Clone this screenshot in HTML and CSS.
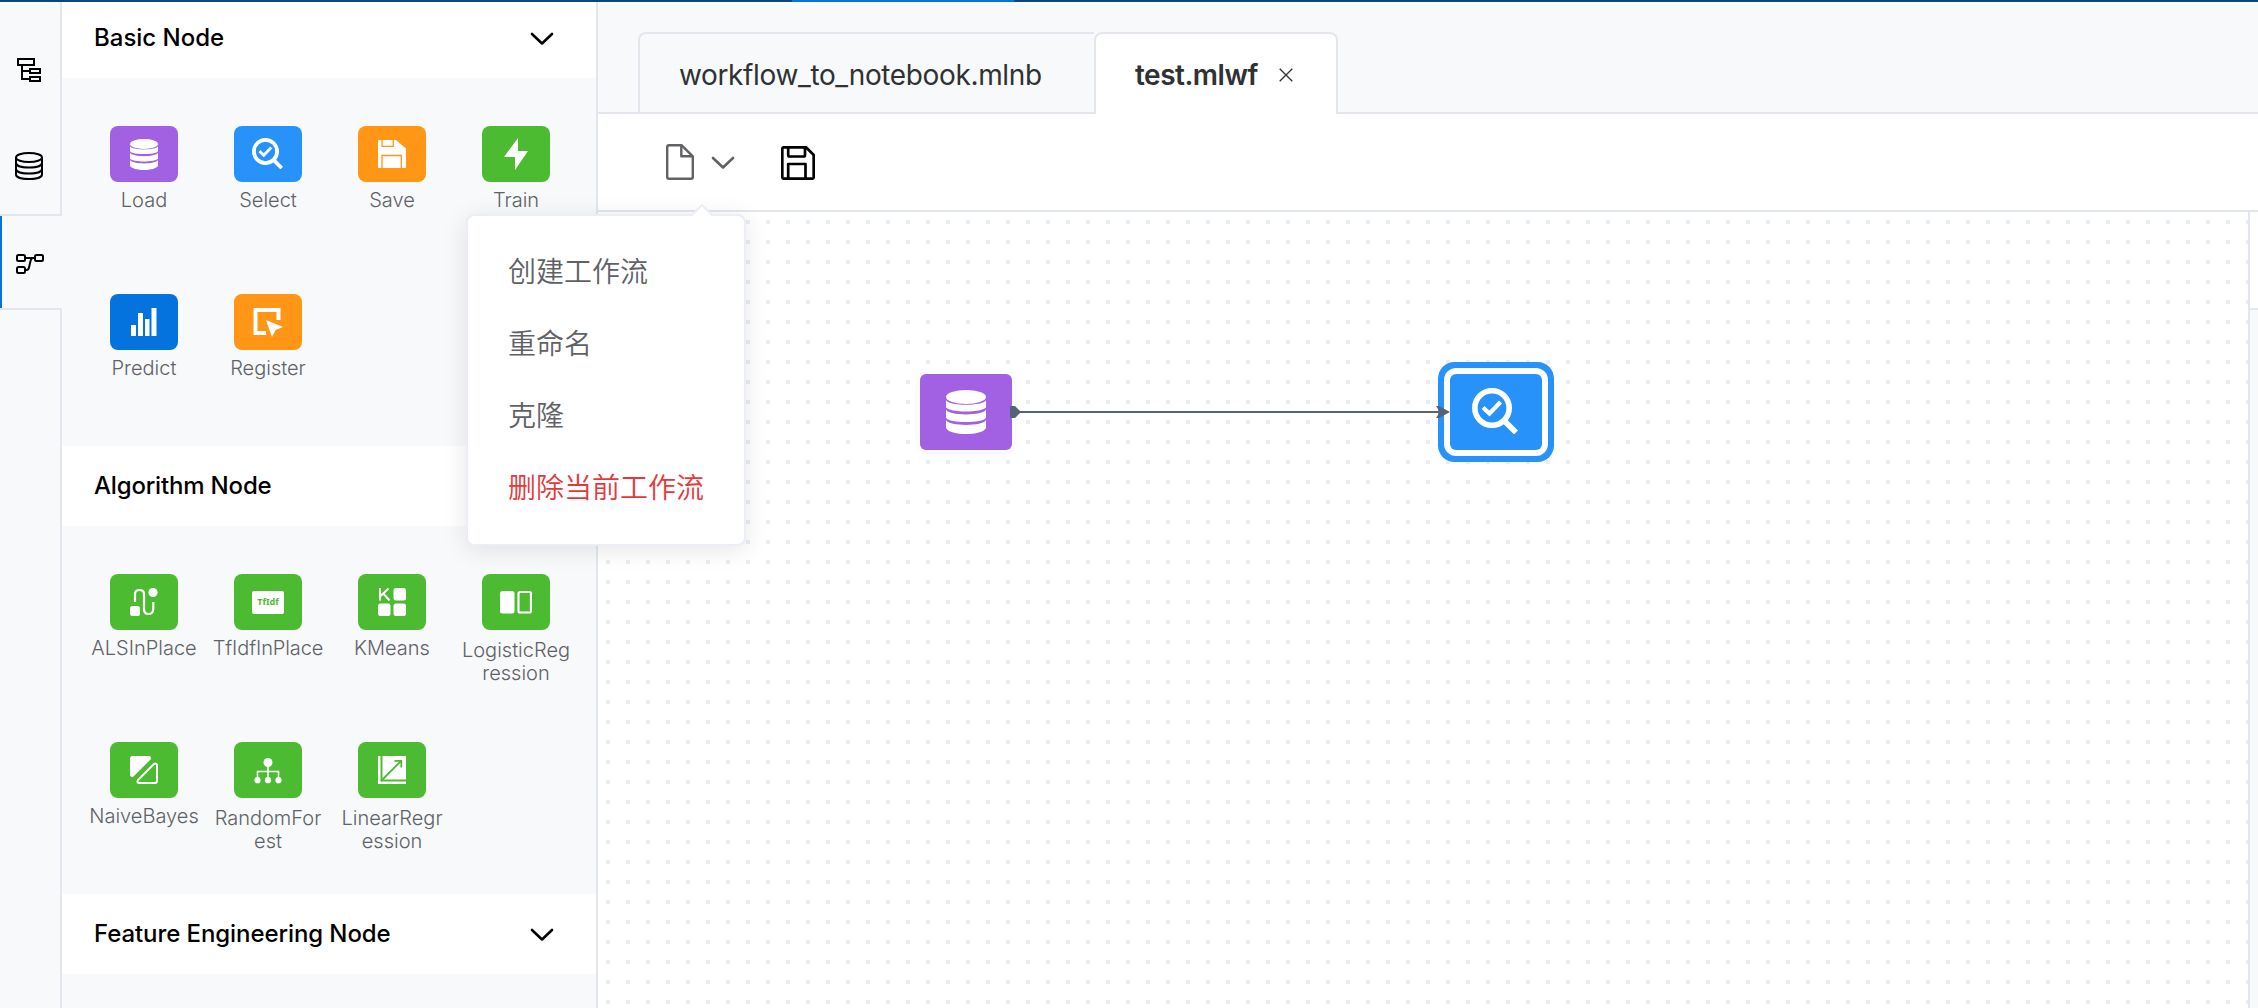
FILE: index.html
```html
<!DOCTYPE html>
<html lang="zh-CN">
<head>
<meta charset="utf-8">
<title>test.mlwf</title>
<link rel="stylesheet" href="styles.css">
</head>
<body>
<svg class="defs" width="0" height="0" aria-hidden="true">
  <symbol id="database" viewBox="0 0 40 44">
    <ellipse cx="20" cy="7" rx="20" ry="7"/>
    <path d="M0 10.200C3 16.200 37 16.200 40 10.200V17.200C37 22.800 3 22.800 0 17.200Z"/>
    <path d="M0 19.500C3 26 37 26 40 19.500V27.700C37 33.500 3 33.500 0 27.700Z"/>
    <path d="M0 30C3 36.500 37 36.500 40 30V38C36 46 4 46 0 38Z"/>
  </symbol>
  <symbol id="search-check" viewBox="0 0 46 46">
    <g fill="none" stroke="#fff">
      <circle cx="20" cy="20" r="17.200" stroke-width="5.600"/>
      <path d="M33 33.500L44 44.500" stroke-width="5.600"/>
      <path d="M11 19.500L17.500 25.500L28.500 14" stroke-width="4.200"/>
    </g>
  </symbol>
  <symbol id="chevron" viewBox="0 0 24 14">
    <path d="M2 2L12 11.500L22 2" fill="none" stroke="currentColor" stroke-width="2.600" stroke-linecap="round" stroke-linejoin="round"/>
  </symbol>
</svg>
<div class="topbar"><div class="topbar-active"></div></div>
<div class="app">
  <nav class="rail">
    <div class="rail-item"><svg width="26" height="26" viewBox="0 0 26 26" fill="none" stroke="#000" stroke-width="2"><rect x="2" y="2" width="16" height="6"/><path d="M6 8V22H13M6 14H13"/><rect x="14" y="12" width="10" height="4"/><rect x="14" y="20" width="10" height="4"/></svg></div>
    <div class="rail-item"><svg width="28" height="28" viewBox="0 0 28 28" fill="none" stroke="#000" stroke-width="2"><ellipse cx="14" cy="5.500" rx="13" ry="4.500"/><path d="M1 5.500V22.500C1 28.500 27 28.500 27 22.500V5.500M1 11C1 17 27 17 27 11M1 17C1 23 27 23 27 17"/></svg></div>
    <div class="rail-item rail-current"><svg width="28" height="20" viewBox="0 0 28 20" fill="none" stroke="#000" stroke-width="2"><rect x="1" y="1" width="8" height="6" rx="1.500"/><rect x="19" y="1" width="8" height="6" rx="1.500"/><rect x="1" y="13" width="8" height="6" rx="1.500"/><path d="M9 4H19M9 16H10.500Q12.500 16 13 13.500L14.500 7Q15 4.500 16.500 4"/></svg></div>
    <div class="rail-rest"></div>
  </nav>
  <aside class="panel">
    <section>
      <header class="group-head first"><span>Basic Node</span><svg class="chev" width="24" height="14"><use href="#chevron"/></svg></header>
      <div class="tiles">
        <div class="tile"><div class="badge purple"><svg class="white" width="28" height="31"><use href="#database"/></svg></div><span class="name">Load</span></div>
        <div class="tile"><div class="badge blue"><svg class="lens" width="31" height="31"><use href="#search-check"/></svg></div><span class="name">Select</span></div>
        <div class="tile"><div class="badge orange"><svg width="28" height="28" viewBox="0 0 28 28"><path fill="#fff" d="M0 0H18L28 8.500V28H0Z"/><path fill="none" stroke="#ff9615" stroke-width="1.300" d="M4 0V6.300H15.200V0M4 28V15.500H23.300V28"/></svg></div><span class="name">Save</span></div>
        <div class="tile"><div class="badge green"><svg width="24" height="32" viewBox="0 0 24 32"><path fill="#fff" d="M14 0V13H24L11 32V19H0Z"/></svg></div><span class="name">Train</span></div>
        <div class="tile"><div class="badge deep"><svg width="28" height="30" viewBox="0 0 28 30"><path fill="#fff" d="M1 18H6V29H1ZM8 6H13V29H8ZM15 12H19.500V29H15ZM21.500 1H26.500V29H21.500Z"/></svg></div><span class="name">Predict</span></div>
        <div class="tile"><div class="badge orange"><svg width="30" height="30" viewBox="0 0 30 30"><path fill="none" stroke="#fff" stroke-width="4" d="M25.500 13V3H2.500V26H13"/><path fill="#fff" d="M13 13L30 20L22.500 23L19 30Z"/></svg></div><span class="name">Register</span></div>
      </div>
    </section>
    <section>
      <header class="group-head"><span class="algo">Algorithm Node</span><svg class="chev" width="24" height="14"><use href="#chevron"/></svg></header>
      <div class="tiles">
        <div class="tile"><div class="badge green"><svg width="28" height="28" viewBox="0 0 28 28"><path fill="none" stroke="#fff" stroke-width="2.200" d="M5 14V6Q5 2 9.500 2T14 6V21Q14 26 18.500 26T23.300 21V14"/><circle cx="23" cy="4.500" r="4.600" fill="#fff"/><rect x="0" y="18" width="10" height="10" rx="2.500" fill="#fff"/></svg></div><span class="name">ALSInPlace</span></div>
        <div class="tile"><div class="badge green"><div class="tfidf">TfIdf</div></div><span class="name tight">TfIdfInPlace</span></div>
        <div class="tile"><div class="badge green"><svg width="28" height="28" viewBox="0 0 28 28"><path fill="none" stroke="#fff" stroke-width="2" d="M2 0V12.500M10.500 0.500L2.500 8M5.300 5.500L11.500 12.500"/><g fill="#fff"><rect x="15.500" y="0" width="12.500" height="12.500" rx="2.500"/><rect x="0" y="15.500" width="12.500" height="12.500" rx="2.500"/><rect x="15.500" y="15.500" width="12.500" height="12.500" rx="2.500"/></g></svg></div><span class="name">KMeans</span></div>
        <div class="tile"><div class="badge green"><svg width="32" height="24" viewBox="0 0 32 24"><rect x="0" y="1" width="14.500" height="22.500" rx="2.500" fill="#fff"/><rect x="18.500" y="2" width="12.500" height="20.500" rx="1.500" fill="none" stroke="#fff" stroke-width="2.200"/></svg></div><span class="name two">LogisticReg<br>ression</span></div>
        <div class="tile"><div class="badge green"><svg width="28" height="28" viewBox="0 0 28 28"><path fill="#fff" d="M2.500 0H19.500Q22 1 20.500 3.500L4 20Q1.500 22 0 19.500V2.500Q0 0 2.500 0Z"/><path fill="none" stroke="#fff" stroke-width="2" stroke-linejoin="round" d="M23.500 8.500L8 24Q6.500 27 9 27H25Q27 27 27 25V9Q26 6.500 23.500 8.500Z"/></svg></div><span class="name">NaiveBayes</span></div>
        <div class="tile"><div class="badge green"><svg width="28" height="28" viewBox="0 0 28 28"><path fill="none" stroke="#fff" stroke-width="1.500" d="M14 6V24M3.500 24V15.500H24.500V24"/><g fill="#fff"><circle cx="14" cy="6.500" r="4.500"/><circle cx="3.500" cy="24.200" r="3.100"/><circle cx="14" cy="24.200" r="3.100"/><circle cx="24.500" cy="24.200" r="3.100"/></g></svg></div><span class="name two">RandomFor<br>est</span></div>
        <div class="tile"><div class="badge green"><svg width="28" height="28" viewBox="0 0 28 28"><path fill="#fff" d="M0 0H2.500V25.500H28V28H0ZM4.500 0H28V23.500H4.500Z"/><path fill="none" stroke="#4cbb31" stroke-width="1.800" d="M3 25L23 5M16.500 4.900H23.300V11.500"/></svg></div><span class="name two">LinearRegr<br>ession</span></div>
      </div>
    </section>
    <section>
      <header class="group-head"><span class="feat">Feature Engineering Node</span><svg class="chev" width="24" height="14"><use href="#chevron"/></svg></header>
    </section>
  </aside>
  <main class="work">
    <div class="tabs">
      <div class="tab"><span>workflow_to_notebook.mlnb</span></div>
      <div class="tab current"><span>test.mlwf</span><svg width="14" height="14" viewBox="0 0 14 14"><path d="M.7 .7L13.300 13.300M13.300 .7L.7 13.300" stroke="#303133" stroke-width="1.300"/></svg></div>
      <div class="tab-rest"></div>
    </div>
    <div class="toolbar">
      <div class="file-menu">
        <svg width="28" height="36" viewBox="0 0 28 36" fill="none" stroke="#606266" stroke-width="2.400" stroke-linejoin="round"><path d="M3 1.200H15.500L26.800 12.300V33Q26.800 34.800 25 34.800H3Q1.200 34.800 1.200 33V3Q1.200 1.200 3 1.200Z"/><path d="M15.300 1.500V12.200H26.500"/></svg>
        <svg class="file-chev" width="24" height="14"><use href="#chevron"/></svg>
        <div class="menu">
          <svg class="caret" width="24" height="14" viewBox="0 0 24 14"><path d="M1 13L12 1.500L23 13V14H1Z" fill="#fff"/><path d="M1 12L12 1L23 12" fill="none" stroke="#ebeef5" stroke-width="2"/></svg>
          <div class="menu-item">创建工作流</div>
          <div class="menu-item">重命名</div>
          <div class="menu-item">克隆</div>
          <div class="menu-item danger">删除当前工作流</div>
        </div>
      </div>
      <svg class="save" width="34" height="34" viewBox="0 0 34 34" fill="none" stroke="#000" stroke-width="2.700" stroke-linejoin="round"><path d="M3 1.300H25L32.700 9V31Q32.700 32.700 31 32.700H3Q1.300 32.700 1.300 31V3Q1.300 1.300 3 1.300Z"/><path d="M7.200 1.500V9Q7.200 10.500 8.700 10.500H22.500Q24 10.500 24 9V1.500M7.200 32.500V18H24.500V32.500"/></svg>
    </div>
    <div class="canvas-row">
      <div class="canvas">
        <div class="node load"><svg class="white" width="40" height="44"><use href="#database"/></svg></div>
        <div class="node pick"><svg class="lens" width="46" height="46"><use href="#search-check"/></svg></div>
        <svg class="edge" width="442" height="16" viewBox="0 0 442 16"><path d="M8 8H432" stroke="#546376" stroke-width="2"/><path d="M2 2H7L12 7V9L7 14H2ZM428 2H431L442 8L431 14H428L432 8Z" fill="#546376"/></svg>
      </div>
      <div class="dock"></div>
    </div>
  </main>
</div>
</body>
</html>
```
FILE: styles.css
```css
* { box-sizing: border-box; }
body { margin: 0; width: 2258px; height: 1008px; overflow: hidden; background: #fff; font-family: Inter, "Noto Sans CJK SC", sans-serif; }
svg { display: block; flex: none; }
.defs { position: absolute; }
.topbar { height: 2px; background: #0a477f; padding-left: 792px; }
.topbar-active { width: 222px; height: 2px; background: #0473de; }
.app { display: flex; height: 1006px; }

.rail { width: 62px; flex: none; display: flex; flex-direction: column; background: #f8f9fb; }
.rail-item { height: 96px; display: flex; align-items: center; padding-left: 15px; border-right: 2px solid #e4e6ee; }
.rail-item:first-child { height: 116px; padding-top: 20px; padding-left: 16px; }
.rail-item.rail-current { padding: 4px 0 0 16px; border: solid #e4e6ee; border-width: 2px 0; background: linear-gradient(#0473de, #0473de) left / 2px 100% no-repeat; }
.rail-rest { flex: 1; border-right: 2px solid #e4e6ee; }

.panel { width: 536px; flex: none; background: #f8f9fb; border-right: 2px solid #e4e6ee; overflow: hidden; }
.group-head { height: 80px; background: #fff; display: flex; align-items: center; justify-content: space-between; padding: 0 42px 0 32px; font-size: 24px; font-weight: 500; line-height: 30px; color: #000; }
.group-head.first { height: 76px; padding-bottom: 4px; }
.chev { margin-top: 2px; }
.algo { letter-spacing: -.18px; }
.feat { letter-spacing: -.08px; }
.tiles { height: 368px; padding: 48px 20px 0; display: grid; grid-template-columns: repeat(4, 124px); grid-template-rows: 168px 152px; }
.tile { display: flex; flex-direction: column; align-items: center; }
.badge { width: 68px; height: 56px; border-radius: 8px; display: flex; align-items: center; justify-content: center; }
.purple { background: #a260e2; }
.blue { background: #2792f9; }
.orange { background: #ff9615; }
.green { background: #4cbb31; }
.deep { background: #0473de; }
.white { fill: #fff; }
.lens { margin: 0 2px 2px 0; }
.name { margin-top: 7px; font-size: 20px; font-weight: 300; line-height: 23px; color: #606266; text-align: center; white-space: nowrap; }
.name.two { margin-top: 9px; }
.name.tight { letter-spacing: -.1px; }
.tfidf { width: 32px; height: 23px; border-radius: 2px; background: #fff; color: #4cbb31; font: 700 9px/22px "Noto Sans", sans-serif; text-align: center; }

.work { flex: 1; min-width: 0; display: flex; flex-direction: column; }
.tabs { height: 112px; flex: none; padding-top: 30px; background: #f8f9fb; display: flex; }
.tabs::before { content: ""; width: 40px; border-bottom: 2px solid #e4e6ee; }
.tab { width: 456px; border: 2px solid #e4e6ee; border-right: 0; border-radius: 8px 0 0 0; padding: 3px 0 0 39px; display: flex; align-items: center; font-size: 28px; letter-spacing: -.36px; color: #303133; }
.tab.current { width: 244px; background: #fff; border-right: 2px solid #e4e6ee; border-bottom: 0; border-radius: 8px 8px 0 0; font-weight: 600; justify-content: space-between; padding: 1px 43px 0 39px; letter-spacing: -.5px; }
.tab-rest { flex: 1; border-bottom: 2px solid #e4e6ee; }
.toolbar { height: 98px; flex: none; border-bottom: 2px solid #e4e6ee; display: flex; align-items: center; padding-left: 68px; }
.file-menu { position: relative; display: flex; align-items: center; width: 115px; }
.file-chev { margin: 2px 0 0 17px; color: #606266; }
.save { margin-top: 2px; }

.menu { position: absolute; z-index: 2; left: -200px; top: 70px; width: 280px; height: 332px; padding: 18px 0 0 40px; background: #fff; border: 2px solid #ebeef5; border-radius: 8px; box-shadow: 0 4px 24px rgba(0, 0, 0, .1); }
.caret { position: absolute; left: 222px; top: -12px; }
.menu-item { height: 72px; line-height: 72px; font-size: 28px; color: #606266; font-weight: 350; font-family: "Noto Sans CJK SC", sans-serif; white-space: nowrap; }
.danger { color: #e5383b; }

.canvas-row { flex: 1; display: flex; }
.canvas { position: relative; flex: 1; border-right: 2px solid #e4e6ee; background: conic-gradient(from 90deg at 16px 16px, #e8edf6 90deg, transparent 0) -8px -8px / 20px 20px; }
.dock { width: 8px; background: #f8f9fb; }
.dock::before { content: ""; display: block; height: 96px; background: #fff; border-bottom: 2px solid #e4e6ee; }
.node { position: absolute; top: 162px; width: 92px; height: 76px; border-radius: 6px; display: flex; align-items: center; justify-content: center; }
.node.load { left: 322px; background: #a260e2; box-shadow: 0 0 0 2px #fff, 0 2px 12px rgba(0, 0, 0, .07); }
.node.pick { left: 852px; background: #2792f9; box-shadow: 0 0 0 6px #fff, 0 0 0 12px #2792f9; }
.edge { position: absolute; left: 410px; top: 192px; }
```
